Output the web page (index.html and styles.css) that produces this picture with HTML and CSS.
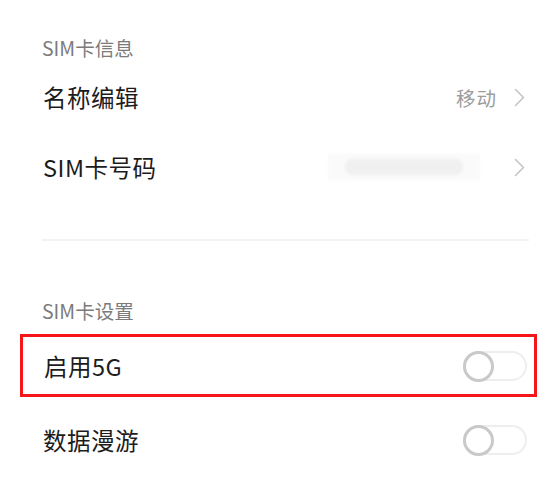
FILE: index.html
```html
<!DOCTYPE html>
<html lang="zh">
<head>
<meta charset="utf-8">
<link rel="stylesheet" href="styles.css">
</head>
<body>
<div class="page">
  <div class="section-title first">SIM卡信息</div>
  <div class="row">
    <span class="label">名称编辑</span>
    <span class="right">
      <span class="value">移动</span>
      <svg class="chev" width="11" height="19" viewBox="0 0 11 19"><path d="M1.5 1.5 L9.5 9.5 L1.5 17.5" fill="none" stroke="#c4c4c4" stroke-width="1.6" stroke-linecap="round" stroke-linejoin="round"/></svg>
    </span>
  </div>
  <div class="row">
    <span class="label">SIM卡号码</span>
    <span class="right">
      <span class="blurred"><span class="blob"></span></span>
      <svg class="chev" width="11" height="19" viewBox="0 0 11 19"><path d="M1.5 1.5 L9.5 9.5 L1.5 17.5" fill="none" stroke="#c4c4c4" stroke-width="1.6" stroke-linecap="round" stroke-linejoin="round"/></svg>
    </span>
  </div>
  <div class="divider"></div>
  <div class="section-title second">SIM卡设置</div>
  <div class="highlight">
    <div class="row boxed">
      <span class="label">启用5G</span>
      <span class="toggle"><span class="knob"></span></span>
    </div>
  </div>
  <div class="row toggle-row">
    <span class="label">数据漫游</span>
    <span class="toggle"><span class="knob"></span></span>
  </div>
</div>
</body>
</html>
```
FILE: styles.css
```css
* { box-sizing: border-box; }
html, body { margin: 0; padding: 0; background: #fff; }
body {
  font-family: "Noto Sans CJK SC", "Noto Sans", sans-serif;
  color: #1c1c1c;
}
.page {
  width: 545px;
  padding: 0 8px 0 20px;
  display: flex;
  flex-direction: column;
}
.section-title {
  height: 28px;
  line-height: 28px;
  padding-left: 22px;
  font-size: 19.5px;
  color: #7b7b7b;
}
.section-title.first { margin-top: 34px; }
.section-title.second { margin-top: 56px; }
.row {
  height: 70px;
  display: flex;
  align-items: center;
  justify-content: space-between;
  padding: 0 12px 0 23px;
}
.label {
  font-size: 23.5px;
  line-height: 30px;
  letter-spacing: 0.5px;
}
.right {
  display: flex;
  align-items: center;
}
.value {
  font-size: 19.5px;
  color: #9c9c9c;
  letter-spacing: 1px;
  margin-right: 17px;
}
.chev { display: block; }
.blurred {
  width: 152px;
  height: 26px;
  background: #fafafa;
  display: flex;
  align-items: center;
  justify-content: center;
  margin-right: 34px;
  filter: blur(1.5px);
}
.blob {
  width: 118px;
  height: 16px;
  border-radius: 8px;
  background: #f0f0f0;
}
.divider {
  margin: 37px 8px 0 22px;
  height: 2px;
  background: #f3f3f3;
}
.highlight {
  margin-top: 9px;
  width: 517px;
  height: 63px;
  border: 3px solid #f5161a;
}
.row.boxed {
  height: 57px;
  padding: 0 7px 0 21px;
}
.toggle-row {
  margin-top: 8px;
  padding-right: 10px;
}
.toggle {
  position: relative;
  width: 64px;
  height: 30px;
  border: 2px solid #eeeeee;
  border-radius: 15px;
  background: #fff;
}
.knob {
  position: absolute;
  left: -2px;
  top: -2px;
  width: 31px;
  height: 31px;
  border-radius: 50%;
  border: 3.5px solid #c9c9c9;
  background: #fff;
}
```
